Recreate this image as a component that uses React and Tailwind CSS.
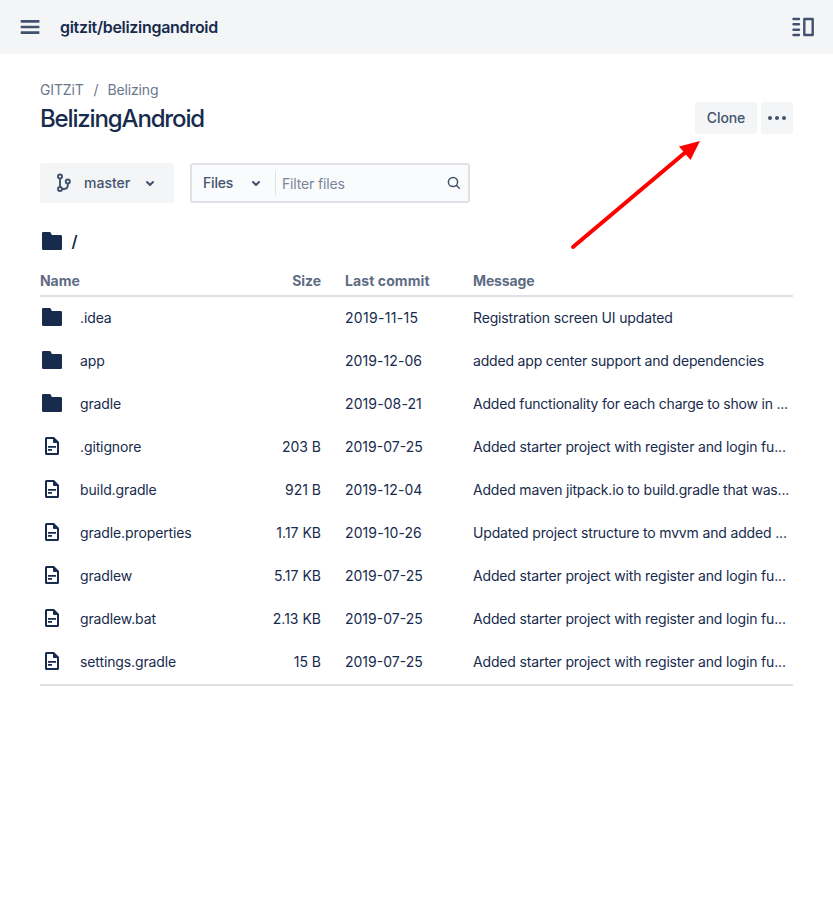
import React from "react";

const FILES = [
  { name: ".idea", folder: true, size: "", date: "2019-11-15", dateClass: "tracking-[0.3px]", message: "Registration screen UI updated", messageClass: "tracking-[-0.15px]" },
  { name: "app", folder: true, size: "", date: "2019-12-06", dateClass: "tracking-[0.07px]", message: "added app center support and dependencies", messageClass: "tracking-[-0.18px]" },
  { name: "gradle", folder: true, size: "", date: "2019-08-21", dateClass: "tracking-[0.1px]", message: "Added functionality for each charge to show in ...", messageClass: "tracking-[-0.21px]" },
  { name: ".gitignore", size: "203 B", date: "2019-07-25", message: "Added starter project with register and login fu...", messageClass: "tracking-[-0.16px]" },
  { name: "build.gradle", size: "921 B", date: "2019-12-04", dateClass: "tracking-[0.07px]", message: "Added maven jitpack.io to build.gradle that was...", messageClass: "tracking-[-0.19px]" },
  { name: "gradle.properties", size: "1.17 KB", date: "2019-10-26", dateClass: "tracking-[0.1px]", message: "Updated project structure to mvvm and added ...", messageClass: "tracking-[-0.16px]" },
  { name: "gradlew", size: "5.17 KB", date: "2019-07-25", message: "Added starter project with register and login fu...", messageClass: "tracking-[-0.16px]" },
  { name: "gradlew.bat", size: "2.13 KB", date: "2019-07-25", message: "Added starter project with register and login fu...", messageClass: "tracking-[-0.16px]" },
  { name: "settings.gradle", size: "15 B", date: "2019-07-25", message: "Added starter project with register and login fu...", messageClass: "tracking-[-0.16px]" },
];

function FolderIcon() {
  return (
    <svg className="block h-6 w-6 shrink-0" viewBox="0 0 24 24" fill="#172B4D">
      <path d="M2 4.400C2 3.500 2.600 3 3.500 3h5.900c.8 0 1.300.4 1.600 1.100L11.800 6h8.700c1 0 1.500.6 1.500 1.500v12c0 1-.6 1.500-1.500 1.500H3.500c-1 0-1.500-.6-1.500-1.500z" />
    </svg>
  );
}

function FileIcon() {
  return (
    <svg className="block h-6 w-6 shrink-0" viewBox="0 0 24 24" fill="none">
      <path d="M13.500 4H6.500a.5.5 0 0 0-.5.5v15a.5.5 0 0 0 .5.5h11a.5.5 0 0 0 .5-.5V8.500" stroke="#172B4D" strokeWidth="2" />
      <path d="M13 3h1l5 5v1h-5a1 1 0 0 1-1-1z" fill="#172B4D" />
      <path d="M8 12.800h8M8 15.900h4" stroke="#172B4D" strokeWidth="1.800" />
    </svg>
  );
}

function Chevron() {
  return (
    <svg className="block h-6 w-6 shrink-0" viewBox="0 0 24 24" fill="none" stroke="#42526E" strokeWidth="2" strokeLinecap="round" strokeLinejoin="round">
      <path d="M9 11l3 3 3-3" />
    </svg>
  );
}

function Header() {
  return (
    <header className="flex h-[54px] items-center bg-[#F4F5F7] pl-[18px] pr-[17px]">
      <svg className="block h-6 w-6" viewBox="0 0 24 24" fill="#42526E">
        <rect x="2.700" y="5" width="18.700" height="2.800" rx=".4" />
        <rect x="2.700" y="10.700" width="18.700" height="2.600" rx=".4" />
        <rect x="2.700" y="16.200" width="18.700" height="2.800" rx=".4" />
      </svg>
      <div className="ml-[18px] text-base font-semibold tracking-[-0.3px]">gitzit/belizingandroid</div>
      <svg className="ml-auto block h-6 w-6" viewBox="0 0 24 24" fill="none" stroke="#42526E" strokeWidth="2.400" strokeLinecap="round" strokeLinejoin="round">
        <path d="M1.500 4h5.500M1.500 9.300h5.500M1.500 14.700h5.500M1.500 20h5.500" />
        <rect x="12.300" y="4" width="8.400" height="16" />
      </svg>
    </header>
  );
}

function Title() {
  return (
    <div className="flex h-[54px] items-end justify-between">
      <div>
        <div className="flex h-5 items-center text-sm leading-5 tracking-[-0.15px] text-[#6B778C]">
          <span className="w-[53.500px]">GITZiT</span>
          <span className="w-[14px]">/</span>
          <span>Belizing</span>
        </div>
        <h1 className="mt-1 h-[30px] text-2xl font-medium leading-[30px] tracking-[-1.150px]">BelizingAndroid</h1>
      </div>
      <div className="flex gap-1 text-[#42526E]">
        <button className="h-8 w-[62px] rounded-[3px] bg-[#F4F5F7] text-sm font-medium tracking-[-0.1px]">Clone</button>
        <button className="flex h-8 w-8 items-center justify-center rounded-[3px] bg-[#F4F5F7]">
          <svg className="block h-6 w-6" viewBox="0 0 24 24" fill="#42526E">
            <circle cx="5" cy="12" r="2" />
            <circle cx="12" cy="12" r="2" />
            <circle cx="19" cy="12" r="2" />
          </svg>
        </button>
      </div>
    </div>
  );
}

function Filters() {
  return (
    <div className="mt-[29px] flex h-10 gap-4 text-sm font-medium text-[#42526E]">
      <button className="flex w-[134px] items-center rounded-[3px] bg-[#F4F5F7] pl-3">
        <svg className="block h-6 w-6" viewBox="0 0 24 24" fill="none" stroke="#42526E" strokeWidth="1.900">
          <circle cx="8" cy="5.500" r="2.050" />
          <circle cx="8" cy="18" r="2.050" />
          <circle cx="15.800" cy="10.500" r="2.050" />
          <path d="M8 7.500v8.500M10 18h2c2.300 0 3.800-1.600 3.800-3.900v-1.700" />
        </svg>
        <span className="ml-2 w-[54px] text-left">master</span>
        <Chevron />
      </button>
      <div className="flex w-[280px] items-center rounded-[3px] border-2 border-[#DFE1E6] bg-[#FAFBFC]">
        <span className="ml-[11px] w-[41px] tracking-[-0.2px]">Files</span>
        <Chevron />
        <div className="ml-[7px] h-6 w-px bg-[#DFE1E6]" />
        <span className="ml-1.5 mt-px grow font-normal tracking-[-0.15px] text-[#7A869A]">Filter files</span>
        <svg className="mr-0.5 block h-6 w-6" viewBox="0 0 24 24" fill="none" stroke="#42526E" strokeWidth="1.500" strokeLinecap="round">
          <circle cx="11" cy="11" r="4.600" />
          <path d="M14.500 14.500L17.300 17.300" />
        </svg>
      </div>
    </div>
  );
}

function FileTable() {
  return (
    <div className="mt-[13px] text-sm">
      <div className="grid h-[31px] grid-cols-[281px_24px_128px_1fr] items-center border-b-2 border-[#DFE1E6] font-bold tracking-[-0.05px] text-[#5E6C84]">
        <div className="flex justify-between">
          <span>Name</span>
          <span>Size</span>
        </div>
        <span />
        <span className="tracking-[0.1px]">Last commit</span>
        <span className="tracking-[-0.15px]">Message</span>
      </div>
      <div className="border-b-2 border-[#DFE1E6]">
        {FILES.map((file) => (
          <div key={file.name} className="grid h-[43px] grid-cols-[40px_241px_24px_128px_1fr] items-start pt-2 leading-[30px]">
            {file.folder ? <FolderIcon /> : <FileIcon />}
            <div className="-mt-0.5 flex justify-between">
              <span className="tracking-[-0.12px]">{file.name}</span>
              <span>{file.size}</span>
            </div>
            <span />
            <span className={`-mt-0.5 ${file.dateClass || ""}`}>{file.date}</span>
            <span className={`-mt-0.5 whitespace-nowrap ${file.messageClass}`}>{file.message}</span>
          </div>
        ))}
      </div>
    </div>
  );
}

export default function App() {
  return (
    <div className="relative h-[897px] w-[833px] overflow-hidden bg-white font-['Inter','Liberation_Sans',sans-serif] text-[#172B4D]">
      <Header />
      <main className="px-10 pt-[26px]">
        <Title />
        <Filters />
        <div className="mt-[26px] flex h-6 items-center gap-[7.500px]">
          <FolderIcon />
          <span className="text-base font-semibold">/</span>
        </div>
        <FileTable />
      </main>
      <svg className="absolute left-[565px] top-[135px]" width="140" height="120" viewBox="0 0 140 120">
        <path d="M8 112L122 16" stroke="#FF0000" strokeWidth="4" strokeLinecap="round" />
        <path d="M135 6L114 11.500L125.500 25z" fill="#FF0000" />
      </svg>
    </div>
  );
}
